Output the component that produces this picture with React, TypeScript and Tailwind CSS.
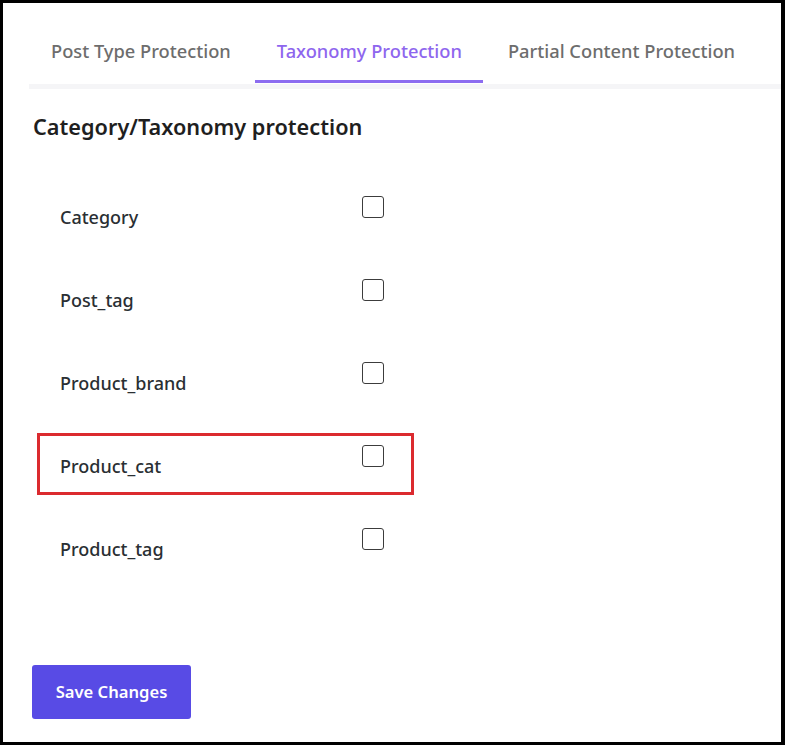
const tabs = ["Post Type Protection", "Taxonomy Protection", "Partial Content Protection"];
const taxonomies = ["Category", "Post_tag", "Product_brand", "Product_cat", "Product_tag"];

export default function App() {
  return (
    <div className="h-[747px] w-[785px] bg-white" style={{ fontFamily: '"Noto Sans", "Open Sans", sans-serif' }}>
      <div className="h-[745px] w-[785px] border-t-[3px] border-r-[4px] border-b-[3px] border-l-[3px] border-black bg-white pt-[36px] pl-[26px]">
        <div className="flex gap-[3px] border-b-[5px] border-[#f5f5f7]">
          {tabs.map((tab, i) => (
            <div
              key={tab}
              className={
                i === 1
                  ? "mb-px border-b-[3px] border-[#8c6cf0] pr-[21px] pb-[17px] pl-[22px] text-[18.3px] leading-6 font-medium text-[#8e66ee]"
                  : "mb-px border-b-[3px] border-transparent pr-[21px] pb-[17px] pl-[22px] text-[18.3px] leading-6 font-medium text-[#6d6d6d]"
              }
            >
              {tab}
            </div>
          ))}
        </div>

        <h2 className="mt-[24px] ml-[4px] text-[21.7px] leading-7 font-semibold text-[#1f1f1f]">
          Category/Taxonomy protection
        </h2>

        <div className="mt-[43px] ml-[8px] flex w-[377px] flex-col gap-[21px]">
          {taxonomies.map((name) => (
            <div
              key={name}
              className={
                name === "Product_cat"
                  ? "flex h-[62px] items-start border-[3px] border-[#db2a2f]"
                  : "flex h-[62px] items-start border-[3px] border-transparent"
              }
            >
              <span className="w-[322px] shrink-0 pt-[18px] pl-[20px] text-[18px] leading-6 font-medium text-[#2a2f33]">
                {name}
              </span>
              <input
                type="checkbox"
                className="mt-[9px] h-[22px] w-[22px] shrink-0 appearance-none rounded-[3px] border-[1.5px] border-[#3c3c3c] bg-white"
              />
            </div>
          ))}
        </div>

        <button className="mt-[87px] ml-[3px] h-[54px] w-[159px] rounded-[3px] bg-[#584be5] text-[16.6px] font-semibold text-white">
          Save Changes
        </button>
      </div>
    </div>
  );
}
